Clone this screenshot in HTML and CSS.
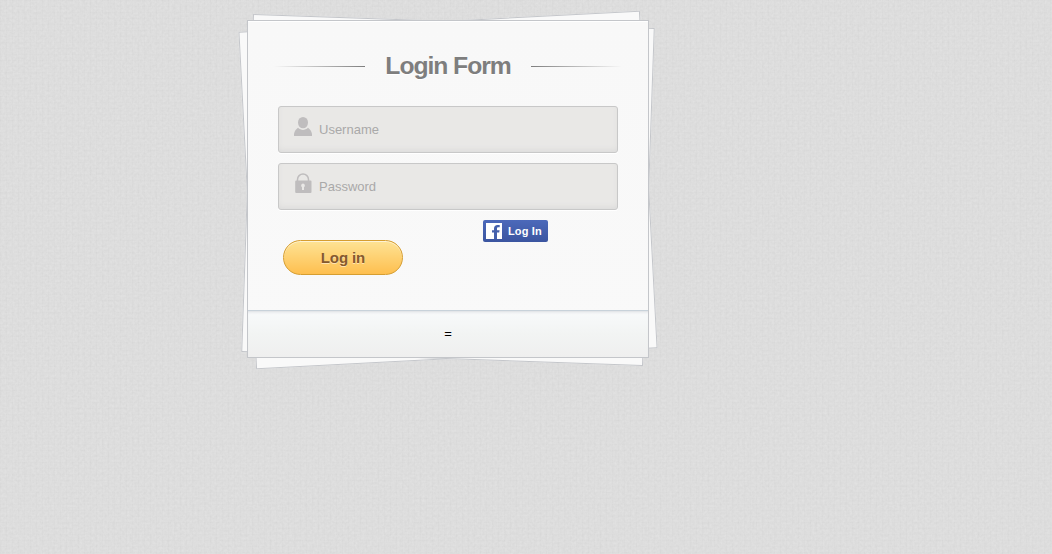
FILE: index.html
```html
<!DOCTYPE html>
<html lang="en">
<head>
<meta charset="utf-8">
<title>Login Form</title>
<link rel="stylesheet" href="styles.css">
</head>
<body>
<svg class="texture" aria-hidden="true">
  <filter id="grain" x="0" y="0" width="100%" height="100%" color-interpolation-filters="sRGB">
    <feTurbulence type="fractalNoise" baseFrequency="0.4" numOctaves="2" seed="4"/>
    <feColorMatrix values="0.045 0 0 0 0.846  0.045 0 0 0 0.846  0.045 0 0 0 0.846  0 0 0 0 1"/>
  </filter>
  <rect width="100%" height="100%" filter="url(#grain)"/>
</svg>
<div class="weave"></div>
<main class="card">
  <form class="form">
    <h1 class="title">Login Form</h1>
    <label class="field">
      <svg class="icon" width="18" height="20" viewBox="0 0 18 20"><ellipse cx="9" cy="6.600" rx="5" ry="5.700"/><path d="M0 20V18C.5 15 2 13.500 4 11.800C7 14.600 11 14.600 14 11.800C16 13.500 17.500 15 18 18V20Z"/></svg>
      <input class="input" type="text" placeholder="Username">
    </label>
    <label class="field">
      <svg class="icon" width="18" height="20" viewBox="0 0 18 20"><path d="M3.500 8V6.500a5.500 5.500 0 0 1 11 0V8" fill="none" stroke="#bfbdbe" stroke-width="1.500"/><path fill-rule="evenodd" d="M2.200 7.500H16.500a1 1 0 0 1 1 1v10.500a1 1 0 0 1-1 1H2.200a1 1 0 0 1-1-1V8.500a1 1 0 0 1 1-1ZM9 10.500a2.100 2.100 0 0 0-1 3.800V17h2v-2.700A2.100 2.100 0 0 0 9 10.500Z"/></svg>
      <input class="input" type="password" placeholder="Password">
    </label>
    <div class="actions">
      <button class="submit" type="button">Log in</button>
      <a class="facebook"><svg width="16" height="16" viewBox="0 0 16 16"><path fill="#fff" d="M0 0H16V16H0Z"/><path fill="#4460ac" d="M8 16V9.600H6V7.200H8V5.500C8 3.200 9.400 2 11.500 2H13.700V4.300H12.200C11.200 4.300 11 4.800 11 5.800V7.200H13.600L13.200 9.600H11V16Z"/></svg>Log In</a>
    </div>
  </form>
  <footer class="foot">=</footer>
</main>
</body>
</html>
```
FILE: styles.css
```css
* { box-sizing: border-box; }
html { height: 100%; background: #dcdcdc; }
body {
  margin: 0;
  height: 100%;
  overflow: hidden;
  padding: 20px 0 0 247px;
  font-family: "Liberation Sans", Arial, sans-serif;
  font-size: 13px;
}
.texture { position: absolute; inset: 0; width: 100%; height: 100%; z-index: -3; }
.weave {
  position: absolute;
  inset: 0;
  z-index: -2;
  background:
    repeating-linear-gradient(90deg, rgba(0,0,0,.008) 0 1px, transparent 1px 6px),
    repeating-linear-gradient(rgba(0,0,0,.008) 0 1px, transparent 1px 6px);
}
.card {
  position: relative;
  width: 402px;
  height: 338px;
  display: flex;
  flex-direction: column;
  border: 1px solid #c4c6ca;
  background: linear-gradient(#f8f8f8, #f9f9f9);
  box-shadow: inset 0 1px #fff;
}
.card::before, .card::after {
  content: "";
  position: absolute;
  inset: 0 -1px -2px;
  z-index: -1;
  background: #f9f9f9;
  border: 1px solid #c4c6ca;
}
.card::before { transform: rotate(-3deg); }
.card::after { transform: rotate(2deg); }
.form { flex: 1; padding: 25px 26px 0; }
.title {
  display: flex;
  align-items: center;
  justify-content: space-between;
  margin: 0 0 20px;
  height: 40px;
  font-size: 24.7px;
  letter-spacing: -1.05px;
  color: #7e7e7e;
  text-shadow: 0 1px 0 #fff;
}
.title::before, .title::after {
  content: "";
  width: 91px;
  height: 1px;
  background: linear-gradient(90deg, #f8f8f8, #7e7e7e);
}
.title::after { background: linear-gradient(90deg, #7e7e7e, #f8f8f8); }
.field {
  display: flex;
  height: 47px;
  margin: 0 4px 10px;
  padding-left: 15px;
  background: #e9e8e6;
  border: 1px solid #c8c8c8;
  border-radius: 3px;
  box-shadow: 0 1px 0 #fff, inset 0 -3px 6px -2px #d8d8d8;
}
.icon { margin-top: 9px; fill: #bfbdbe; }
.input {
  flex: 1;
  min-width: 0;
  margin-left: 7px;
  padding: 0;
  border: 0;
  background: none;
  font: 13px "Liberation Sans", Arial, sans-serif;
}
.input::placeholder { color: #a9a9a9; }
.actions { display: flex; align-items: flex-start; }
.submit {
  width: 120px;
  height: 35px;
  margin: 20px 80px 0 9px;
  padding: 0;
  border: 1px solid #d69e31;
  border-radius: 18px;
  background: linear-gradient(#fee395, #febf4f);
  box-shadow: inset 0 1px 0 rgba(255,255,255,.6);
  color: #85592e;
  font: bold 15px "Liberation Sans", Arial, sans-serif;
  letter-spacing: -.1px;
  text-shadow: 0 1px 0 rgba(255,255,255,.5);
}
.facebook {
  display: flex;
  align-items: center;
  width: 65px;
  height: 22px;
  padding-left: 3px;
  gap: 6px;
  border-radius: 2px;
  background: linear-gradient(#4c69ba, #3b55a0);
  color: #fff;
  font-size: 11px;
  font-weight: bold;
  letter-spacing: .15px;
  white-space: nowrap;
}
.foot {
  height: 47px;
  border-top: 1px solid #c8d2da;
  background: linear-gradient(#f8fafb, #f2f4f3 50%, #efefef);
  box-shadow: inset 0 3px 3px -2px #d9dcdf;
  text-align: center;
  line-height: 46px;
}
```
